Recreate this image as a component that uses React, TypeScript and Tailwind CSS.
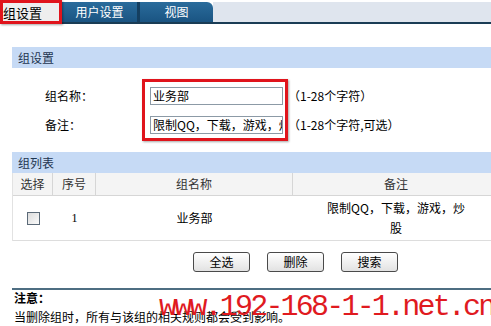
import React from "react";

const cjk = { fontFamily: '"Noto Sans CJK SC", "Liberation Sans", sans-serif' };

function Btn({ label }: { label: string }) {
  return (
    <div className="w-[57px] h-[20px] rounded-[3px] border border-[#4a4a4a] bg-gradient-to-b from-[#ffffff] to-[#e2e2e2] flex items-center justify-center text-[12px] text-black leading-none">
      {label}
    </div>
  );
}

export default function App() {
  return (
    <div className="w-[491px] h-[326px] overflow-hidden bg-white relative text-[12px] text-black" style={cjk}>
      {/* tab bar */}
      <div className="flex h-[24px]">
        <div className="w-[62px] h-[24px] bg-[#eeeeee] flex items-center pl-[3px] text-[13px] text-black leading-none">组设置</div>
        <div className="flex-1 flex flex-col pt-[2px]">
          <div className="flex-1 flex">
            <div className="w-[75px] bg-gradient-to-b from-[#2a6c9c] to-[#1a5482] text-white flex items-center justify-center leading-none">用户设置</div>
            <div className="w-[3px] bg-[#153f60]"></div>
            <div className="w-[73px] rounded-tr-[6px] bg-gradient-to-b from-[#2a6c9c] to-[#1a5482] text-white flex items-center justify-center leading-none">视图</div>
            <div className="flex-1 bg-[#dfe5ee]"></div>
          </div>
          <div className="h-[2px] bg-[#1a3c55]"></div>
        </div>
      </div>

      <div className="w-[500px] pl-[12px]">
        {/* 组设置 header */}
        <div className="mt-[23px] h-[21px] bg-[#c6daf5] flex items-center pl-[6px] text-[#1e3550] leading-none">组设置</div>

        {/* form */}
        <div className="mt-[19px] flex flex-col gap-[11px]">
          <div className="flex items-center h-[18px]">
            <div className="w-[138px] pl-[33px] leading-none">组名称：</div>
            <div className="w-[133px] h-[18px] border border-[#8c9aa6] flex items-center pl-[2px] leading-none overflow-hidden whitespace-nowrap">业务部</div>
            <div className="pl-[5px] leading-none">（1-28个字符）</div>
          </div>
          <div className="flex items-center h-[18px]">
            <div className="w-[138px] pl-[33px] leading-none">备注：</div>
            <div className="w-[133px] h-[18px] border border-[#8c9aa6] flex items-center pl-[2px] leading-none overflow-hidden whitespace-nowrap">限制QQ，下载，游戏，炒股</div>
            <div className="pl-[5px] leading-none">（1-28个字符,可选）</div>
          </div>
        </div>

        {/* 组列表 header */}
        <div className="mt-[18px] h-[21px] bg-[#c6daf5] flex items-center pl-[6px] text-[#1e3550] leading-none">组列表</div>

        {/* table */}
        <div className="grid grid-cols-[40px_43px_197px_206px] border-l border-[#e2e2e2]">
          <div className="h-[23px] bg-[#f4f4f4] border-r border-b border-[#d6d6d6] flex items-center justify-center text-[#333]">选择</div>
          <div className="h-[23px] bg-[#f4f4f4] border-r border-b border-[#d6d6d6] flex items-center justify-center text-[#333]">序号</div>
          <div className="h-[23px] bg-[#f4f4f4] border-r border-b border-[#d6d6d6] flex items-center justify-center text-[#333]">组名称</div>
          <div className="h-[23px] bg-[#f4f4f4] border-b border-[#d6d6d6] flex items-center justify-center text-[#333]">备注</div>

          <div className="h-[45px] border-b border-[#dddddd] flex items-center justify-center">
            <div className="w-[13px] h-[13px] border border-[#5b6a78] bg-gradient-to-br from-[#dcdcdc] to-[#fafafa]"></div>
          </div>
          <div className="h-[45px] border-b border-[#dddddd] flex items-center justify-center" style={{ fontFamily: '"Liberation Serif", serif' }}>1</div>
          <div className="h-[45px] border-b border-[#dddddd] flex items-center justify-center">业务部</div>
          <div className="h-[45px] border-b border-[#dddddd] flex flex-col items-center justify-center leading-[20px]">
            <span>限制QQ，下载，游戏，炒</span>
            <span>股</span>
          </div>
        </div>

        {/* buttons */}
        <div className="mt-[11px] flex gap-[17px] pl-[181px]">
          <Btn label="全选" />
          <Btn label="删除" />
          <Btn label="搜索" />
        </div>

        {/* divider */}
        <div className="mt-[16px] h-[2px] bg-[#4e6e82]"></div>

        <div className="pl-[2px] leading-[16px] font-bold">注意：</div>
        <div className="pl-[2px] mt-[3px] leading-[16px] whitespace-nowrap">当删除组时，所有与该组的相关规则都会受到影响。</div>
      </div>

      {/* annotation boxes */}
      <div className="absolute left-0 top-0 w-[62px] h-[24px] border-[3px] border-[#e0141c] shadow-[1px_1px_2px_rgba(0,0,0,0.35)]"></div>
      <div className="absolute left-[142px] top-[79px] w-[146px] h-[62px] border-[3px] border-[#e0141c] shadow-[1px_1px_2px_rgba(0,0,0,0.35)]"></div>

      {/* watermark */}
      <div className="absolute left-[159px] top-[292px] text-[30px] tracking-[-2.8px] leading-none text-[#e01a1f] whitespace-nowrap" style={{ fontFamily: '"Liberation Mono", monospace' }}>
        www.192-168-1-1.net.cn
      </div>
    </div>
  );
}
